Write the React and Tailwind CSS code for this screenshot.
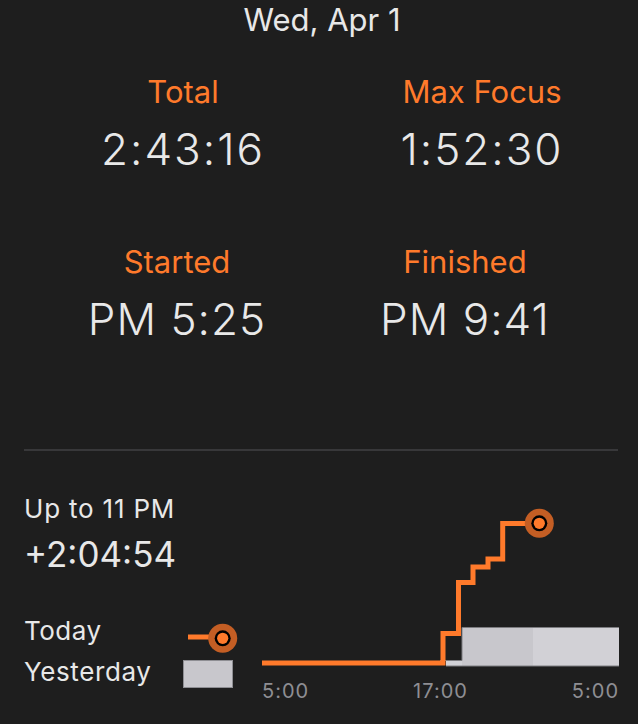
function Stat({ label, value, wide }) {
  return (
    <div className="w-[240px] flex flex-col items-center">
      <div className="h-[40px] leading-[40px] text-[31px] text-[#ff7a2b] whitespace-nowrap">{label}</div>
      <div
        className={
          wide
            ? "mt-[11px] h-[52px] leading-[52px] text-[44px] font-light whitespace-nowrap tracking-[2px]"
            : "mt-[11px] h-[52px] leading-[52px] text-[44px] font-light whitespace-nowrap tracking-[1px]"
        }
      >
        {value}
      </div>
    </div>
  );
}

export default function App() {
  const orange = "#ff7a2b";
  return (
    <div className="w-full h-[724px] bg-[#1e1e1e] overflow-hidden font-['Inter',sans-serif] text-[#e8e8e8]">
      <div className="h-[40px] leading-[40px] text-[31px] text-center pl-[6px]">Wed, Apr 1</div>
      <div className="flex mt-[32px] pl-[63px] gap-[59px]">
        <Stat label="Total" value="2:43:16" wide />
        <Stat label="Max Focus" value="1:52:30" wide />
      </div>
      <div className="flex mt-[67px] pl-[57px] gap-[48px]">
        <Stat label="Started" value="PM 5:25" />
        <Stat label="Finished" value="PM 9:41" />
      </div>
      <div className="ml-6 mr-[20px] mt-[104px] h-[2px] bg-[#38383a]" />
      <div className="flex mt-[42px] pl-6">
        <div className="w-[238px] flex flex-col">
          <div className="h-[32px] leading-[32px] text-[26px] whitespace-nowrap tracking-[0.8px]">Up to 11 PM</div>
          <div className="mt-[9px] h-[40px] leading-[40px] text-[35px] whitespace-nowrap">+2:04:54</div>
          <div className="mt-[41px] flex h-[32px] items-center">
            <span className="w-[159px] leading-[32px] text-[26px] tracking-[0.5px]">Today</span>
            <svg width="60" height="32" className="overflow-visible">
              <line x1="5" y1="22" x2="32" y2="22" stroke={orange} strokeWidth="5" />
              <circle cx="39.7" cy="23.3" r="14.5" fill="#c45e24" />
              <circle cx="39.7" cy="23.3" r="8" fill="#000" />
              <circle cx="39.7" cy="23.3" r="5.6" fill={orange} />
            </svg>
          </div>
          <div className="mt-[9px] flex h-[32px] items-start">
            <span className="w-[159px] leading-[32px] text-[26px] tracking-[0.6px]">Yesterday</span>
            <div className="mt-[4px] w-[50px] h-[28px] bg-[#c8c7cc] border border-[#8e8e93]" />
          </div>
        </div>
        <div className="flex flex-col w-[376px]">
          <svg width="376" height="186" viewBox="262 493 376 186">
            <rect x="446" y="660" width="16" height="6" fill="#d1d1d6" />
            <rect x="462" y="627" width="71" height="39" fill="#c8c7cc" />
            <rect x="533" y="627" width="86" height="39" fill="#d2d1d6" />
            <path d="M440 660.5 H462 V627.5 H619" fill="none" stroke="#7c7c80" strokeWidth="1" />
            <line x1="446" y1="666" x2="619" y2="666" stroke="#7c7c80" strokeWidth="1" />
            <path
              d="M262 663 H443 V633.5 H458.5 V582.5 H473 V567 H488 V559 H502.7 V523.5 H539.3"
              fill="none"
              stroke={orange}
              strokeWidth="5"
              strokeLinejoin="miter"
            />
            <circle cx="539.3" cy="523.3" r="14.5" fill="#c45e24" />
            <circle cx="539.3" cy="523.3" r="8" fill="#000" />
            <circle cx="539.3" cy="523.3" r="5.6" fill={orange} />
          </svg>
          <div className="w-[357px] flex justify-between h-[24px] leading-[24px] text-[20px] text-[#8e8e93] tracking-[1px]">
            <span>5:00</span>
            <span>17:00</span>
            <span>5:00</span>
          </div>
        </div>
      </div>
    </div>
  );
}
